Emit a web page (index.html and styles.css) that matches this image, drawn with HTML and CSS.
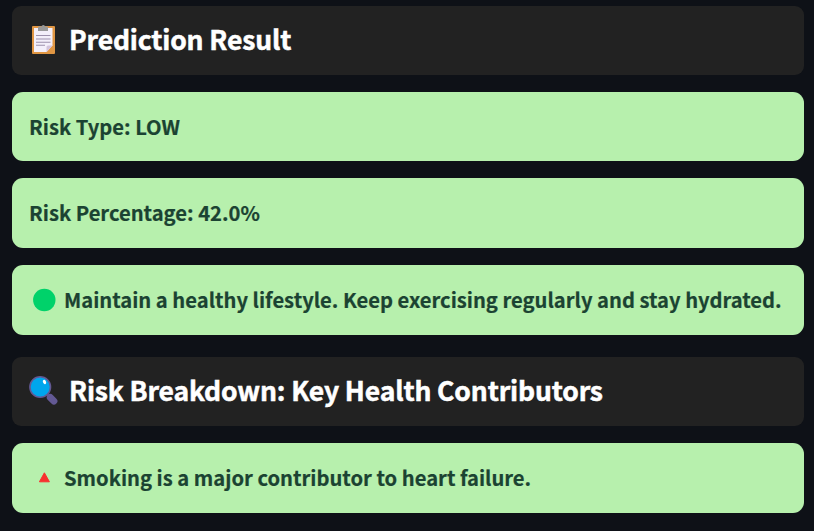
FILE: index.html
```html
<!DOCTYPE html>
<html lang="en">
<head>
<meta charset="utf-8">
<title>Prediction Result</title>
<link rel="stylesheet" href="styles.css">
</head>
<body>
<main class="results">
  <section class="group">
    <h2 class="heading">
      <svg class="heading-icon" viewBox="0 0 32 32" aria-hidden="true">
        <path fill="#e09643" d="M4 3h21q1 0 1 1v26q0 1-1 1H4q-1 0-1-1V4q0-1 1-1z"/>
        <path fill="#f3effa" d="M5 5h18.500v17.500L17.500 29H5z"/>
        <path fill="#d3c4dc" d="M23.500 22.500h-4.500q-1.500 0-1.500 1.500V29z"/>
        <path fill="#999" d="M9 4.500q0-1 1-1h2.300q.5-1.500 2-1.500t2 1.500H18q1 0 1 1V8H9z"/>
        <path stroke="#9d91ad" stroke-width="1.100" d="M7 12.500h14.500M7 16h14.500M7 19.200h14.500M7 22.300h9"/>
      </svg>
      <span class="heading-text">Prediction Result</span>
    </h2>
    <p class="card card-short"><span class="card-text">Risk Type: LOW</span></p>
    <p class="card"><span class="card-text">Risk Percentage: 42.0%</span></p>
    <p class="card">
      <svg class="card-icon" viewBox="0 0 30 30" aria-hidden="true"><circle cx="15.300" cy="15" r="11.200" fill="#00d26a"/></svg>
      <span class="card-text">Maintain a healthy lifestyle. Keep exercising regularly and stay hydrated.</span>
    </p>
  </section>
  <section class="group">
    <h2 class="heading">
      <svg class="heading-icon" viewBox="0 0 32 32" aria-hidden="true">
        <path stroke="#635994" stroke-width="2" d="M18.500 20.500l3 3"/>
        <path stroke="#635994" stroke-width="7" stroke-linecap="round" d="M21.300 23.500l3.600 3.600"/>
        <circle cx="11.200" cy="13" r="10.300" fill="#00a6ed" stroke="#635994" stroke-width="1.600"/>
        <ellipse cx="15.500" cy="8" rx="1.500" ry="2.200" fill="#fff" transform="rotate(-28 15.500 8)"/>
      </svg>
      <span class="heading-text">Risk Breakdown: Key Health Contributors</span>
    </h2>
    <p class="card">
      <svg class="card-icon" viewBox="0 0 30 30" aria-hidden="true"><path fill="#f8312f" stroke="#f8312f" stroke-linejoin="round" d="M15.400 9.800l-5 9h10z"/></svg>
      <span class="card-text">Smoking is a major contributor to heart failure.</span>
    </p>
  </section>
</main>
</body>
</html>
```
FILE: styles.css
```css
* {
  box-sizing: border-box;
}

body {
  margin: 0;
  background: #0e1117;
  font-family: "Noto Sans CJK SC", "Noto Sans", sans-serif;
  font-weight: 700;
}

.results {
  display: flex;
  flex-direction: column;
  gap: 22px;
  padding: 6px 10px 18px 12px;
}

.group {
  display: flex;
  flex-direction: column;
  gap: 17px;
}

.heading,
.card {
  display: flex;
  align-items: center;
  margin: 0;
  padding: 0 17px;
  white-space: nowrap;
}

.heading {
  height: 69px;
  border-radius: 9px;
  background: #222;
  color: #fff;
  font-size: 26.5px;
  letter-spacing: -0.14px;
  -webkit-text-stroke: 0.5px #fff;
}

.heading-icon {
  flex: none;
  width: 32px;
  height: 32px;
  margin: 0 8px 4px 0;
}

.heading-text {
  padding-bottom: 4px;
}

.card {
  height: 70px;
  border-radius: 11px;
  background: #b7f0ad;
  color: #1b4332;
  font-size: 20.2px;
  -webkit-text-stroke: 0.2px #1b4332;
}

.card-text {
  padding-bottom: 2px;
}

.card-short {
  height: 69px;
}

.card-short .card-text {
  padding-bottom: 0;
}

.card-icon {
  flex: none;
  width: 30px;
  height: 30px;
  margin-right: 5px;
}
```
